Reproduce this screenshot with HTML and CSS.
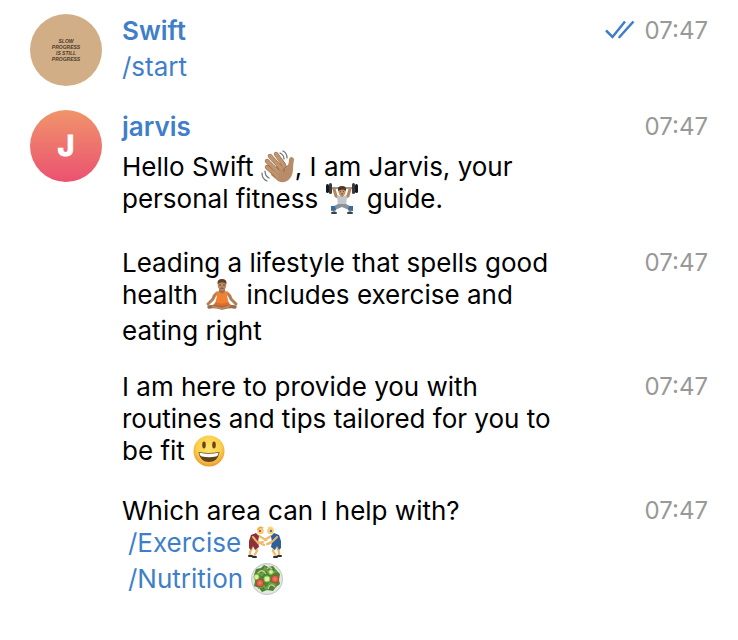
FILE: index.html
```
<!DOCTYPE html>
<html lang="en">
<head>
<meta charset="utf-8">
<title>jarvis</title>
<link rel="stylesheet" href="styles.css">
</head>
<body>
<main class="chat">
  <article class="message">
    <div class="avatar avatar-quote"><span>SLOW<br>PROGRESS<br>IS STILL<br>PROGRESS</span></div>
    <div class="body">
      <h2 class="name">Swift</h2>
      <p class="line"><a href="#start">/start</a></p>
    </div>
    <div class="meta">
      <svg class="checks" viewBox="0 0 30 20" role="img" aria-label="Read"><path d="M1 9.500 7.500 16 20 .5M13.500 15.500 14.500 16 28.500 .5"/></svg>
      <time>07:47</time>
    </div>
  </article>

  <article class="message message-intro">
    <div class="avatar avatar-letter">J</div>
    <div class="body">
      <h2 class="name name-spaced">jarvis</h2>
      <p class="line">Hello Swift <svg class="emoji" viewBox="0 0 34 34" role="img" aria-label="waving hand">
        <g fill="none" stroke="#6b7073" stroke-width="1.200" stroke-linecap="round"><path d="M22 1Q26 3 26 8M19 3Q23 5 23 9M1 23Q1 29 6 31M4 21Q4 26 8 28"/></g>
        <path d="M12 19 21 12 26 16Q28 14 28 10C28 6 33 6 33 10Q32 14 32 19C32 29 24 35 17 31L10 25Z" fill="#b88c68"/>
        <path d="M6 11 16 21M9 6 19 17M15 4 23 15M6 17 15 25" stroke="#8f6542" stroke-width="4.400" stroke-linecap="round"/>
        <path d="M6 11 17 22M9 6 20 18M15 4 24 17M6 17 16 26" stroke="#c1956f" stroke-width="3.500" stroke-linecap="round"/>
        <path d="M26 16Q22 18 23 22" fill="none" stroke="#946a48" stroke-width="1"/>
      </svg>, I am Jarvis, your</p>
      <p class="line line-tall">personal fitness <svg class="emoji" viewBox="0 0 34 34" role="img" aria-label="weight lifter">
        <path d="M4 6H30" stroke="#777" stroke-width="1.500"/>
        <path d="M9 7 11 14 15 16M25 7 23 14 19 16" fill="none" stroke="#b38661" stroke-width="3" stroke-linecap="round"/>
        <path d="M12 14H22L21 24H13Z" fill="#c3c7ca"/><path d="M15 13Q17 17 19 13" fill="#b38661"/>
        <path d="M13 22H21L27 25 24 28 17 25 10 28 7 25Z" fill="#8a939a"/>
        <path d="M9 26V30M25 26V30" stroke="#b38661" stroke-width="3"/>
        <path d="M6 24 10 24 11 28 6 29ZM28 24 24 24 23 28 28 29Z" fill="#2e70a5"/>
        <path d="M7 31H11M23 31H27" stroke="#38434d" stroke-width="2" stroke-linecap="round"/>
        <ellipse cx="17" cy="9.500" rx="3.600" ry="4.800" fill="#c1926c"/><path d="M13 9Q12 4 17 4T21 9Q18 6 13 9Z" fill="#513622"/><path d="M15 9.500H16M18 9.500H19M16 12H18" stroke="#6b462f" stroke-width=".8"/>
        <rect x="1" y="2" width="3" height="9" rx="1.500" fill="#15191d"/><rect x="4" y="1" width="3" height="11" rx="1.500" fill="#343a40"/><rect x="27" y="1" width="3" height="11" rx="1.500" fill="#343a40"/><rect x="30" y="2" width="3" height="9" rx="1.500" fill="#15191d"/>
      </svg> guide.</p>
    </div>
    <div class="meta"><time>07:47</time></div>
  </article>

  <article class="message">
    <div class="body">
      <p class="line">Leading a lifestyle that spells good</p>
      <p class="line line-tall">health <svg class="emoji" viewBox="0 0 34 34" role="img" aria-label="person in lotus position">
        <path d="M12 15Q9 17 8 21L3 26M22 15Q25 17 26 21L31 26" fill="none" stroke="#b07e59" stroke-width="3" stroke-linecap="round"/>
        <path d="M14 9H20V16H14Z" fill="#a17250"/>
        <path d="M11 14 14 13Q17 18 20 13L23 14 22 18 24 26H10L12 18Z" fill="#f08034"/>
        <path d="M11 24Q17 27 23 24L27 28 17 31 7 28Z" fill="#e06c28"/>
        <path d="M4 29Q9 28 17 30Q25 28 30 29" fill="none" stroke="#9b6b47" stroke-width="3.400" stroke-linecap="round"/><path d="M7 28.500 17 30.500 25 28" fill="none" stroke="#c18d64" stroke-width="1.500"/>
        <ellipse cx="17" cy="7" rx="4.300" ry="5.800" fill="#b98961"/><path d="M12.500 6Q12 1 17 1T21.500 6Q17 2.500 12.500 6Z" fill="#60402a"/><path d="M14 7H16M18 7H20M15.500 10.500Q17 9.500 18.500 10.500" fill="none" stroke="#694630" stroke-width=".9"/>
      </svg> includes exercise and</p>
      <p class="line">eating right</p>
    </div>
    <div class="meta"><time>07:47</time></div>
  </article>

  <article class="message">
    <div class="body">
      <p class="line">I am here to provide you with</p>
      <p class="line">routines and tips tailored for you to</p>
      <p class="line line-tall">be fit <svg class="emoji" viewBox="0 0 34 34" role="img" aria-label="smiling face">
        <defs><radialGradient id="face" cx=".5" cy=".4" r=".6"><stop offset="0" stop-color="#ffe568"/><stop offset=".65" stop-color="#fbd04c"/><stop offset="1" stop-color="#e8992c"/></radialGradient></defs>
        <circle cx="17" cy="17" r="15.500" fill="url(#face)"/>
        <ellipse cx="12" cy="11" rx="1.800" ry="3.400" fill="#70421b"/><ellipse cx="22" cy="11" rx="1.800" ry="3.400" fill="#70421b"/>
        <path d="M6.500 18Q17 20 27.500 18C26.500 25 22 28 17 28S7.500 25 6.500 18Z" fill="#62401d"/>
        <path d="M7.500 18.800Q17 20.500 26.500 18.800Q26.500 22 24 22.500Q17 24 10 22.500Q7.500 22 7.500 18.800Z" fill="#fff"/>
      </svg></p>
    </div>
    <div class="meta"><time>07:47</time></div>
  </article>

  <article class="message">
    <div class="body">
      <p class="line">Which area can I help with?</p>
      <p class="line line-tall line-command"><a href="#exercise">/Exercise</a> <svg class="emoji" viewBox="0 0 34 34" role="img" aria-label="wrestlers">
        <g fill="none" stroke="#efbd70" stroke-width="2.400" stroke-linecap="round"><path d="M11 10 18 14M8 15 16 19M23 10 17 14M26 15 19 18M7 20 9 25 6 30M5 20 2 26 2 29M27 20 25 25 28 30M29 20 31 26 31 29"/></g>
        <path d="M3 9 8 7 11 10 10 16 11 21 7 24 5 20 3 24 1 22 1 15Z" fill="#8f3035"/>
        <path d="M31 9 26 7 23 10 24 16 23 21 27 24 29 20 31 24 33 22 33 15Z" fill="#2d5f9d"/>
        <path d="M5 11 10 17 15 16M29 11 24 16 20 18" fill="none" stroke="#edb96b" stroke-width="2" stroke-linecap="round"/>
        <circle cx="12.500" cy="5" r="3.300" fill="#f4cb7c"/><circle cx="22.500" cy="5" r="3.300" fill="#f4cb7c"/>
        <path d="M9.500 4Q11 0 15 2" fill="none" stroke="#edaa40" stroke-width="1.500"/><path d="M20 2Q24 0 25.500 4" fill="none" stroke="#ffd76a" stroke-width="1.500"/>
        <circle cx="12" cy="5" r="1" fill="#b23435"/><circle cx="23" cy="5" r="1" fill="#285792"/>
        <path d="M1 30H4M5 31H8M26 31H29M30 30H33" stroke="#292d34" stroke-width="2" stroke-linecap="round"/>
      </svg></p>
      <p class="line line-command"><a href="#nutrition">/Nutrition</a> <svg class="emoji" viewBox="0 0 34 34" role="img" aria-label="green salad">
        <circle cx="17" cy="17" r="16" fill="#c8cdcc"/><circle cx="17" cy="17" r="14.800" fill="#e4e8e3"/>
        <path d="M4 13 6 7 11 6 14 3 18 5 23 4 26 8 30 12 29 18 30 22 26 25 23 29 17 28 12 30 9 26 4 24 5 19Z" fill="#48872f"/>
        <path d="M7 11 12 13 15 6 20 12 27 9M8 26 14 24 16 27 20 21 26 23" fill="none" stroke="#68a53b" stroke-width="2"/>
        <path d="M8 11Q12 6 16 12M17 7Q19 4 22 7M18 27Q20 20 25 25" fill="none" stroke="#dfb9ae" stroke-width="1.300"/>
        <g fill="#def0a4" stroke="#8fbd55"><circle cx="6.500" cy="15" r="2.600"/><circle cx="17" cy="17" r="3"/><circle cx="21" cy="10" r="2.300"/></g>
        <g fill="#e0624b" stroke="#bd4434"><circle cx="10" cy="21" r="3.700"/><circle cx="25" cy="17" r="3.700"/></g><path d="M8.500 21H11.500M10 19.500V22.500M23.500 17H26.500M25 15.500V18.500" stroke="#ee927a" stroke-width=".8"/>
      </svg></p>
    </div>
    <div class="meta"><time>07:47</time></div>
  </article>
</main>
</body>
</html>
```
FILE: styles.css
```
* { box-sizing: border-box; }

body {
  margin: 0;
  background: #fff;
  color: #000;
  font-family: Inter, "Liberation Sans", sans-serif;
  font-size: 26px;
  line-height: 32px;
}

.chat {
  display: flex;
  flex-direction: column;
  gap: 24px;
  padding: 15px 30px 40px;
}

.message {
  display: grid;
  grid-template-columns: 72px 1fr auto;
  column-gap: 20px;
}

.message-intro { margin-bottom: 4px; }

.avatar {
  display: grid;
  place-items: center;
  width: 72px;
  height: 72px;
  margin: -1px 0 1px;
  border-radius: 50%;
}

.avatar-quote {
  background: #d2ae86;
  color: #4a3c2f;
  font: italic bold 5px/6px "Liberation Sans", sans-serif;
  text-align: center;
}

.avatar-letter {
  background: linear-gradient(#f0956b, #eb5171);
  color: #fff;
  font-size: 29px;
  font-weight: 700;
  -webkit-text-stroke: 1px #fff;
}

.body { grid-column: 2; }

.name {
  margin: 0 0 4px;
  color: #3f7fc9;
  font-size: 26px;
  font-weight: 600;
}

.name-spaced { margin-bottom: 8px; }

.line {
  height: 32px;
  margin: 0;
  white-space: nowrap;
}

.line-tall { height: 36px; }

.line-command { padding-left: 6px; }

a {
  color: #3f7fc9;
  text-decoration: none;
}

.emoji {
  width: 34px;
  height: 34px;
  margin: -4px 0;
  vertical-align: -4px;
}

.meta {
  display: flex;
  align-items: center;
  gap: 10px;
  height: 32px;
  color: #999;
  font-size: 24px;
}

.checks {
  width: 30px;
  height: 20px;
  fill: none;
  stroke: #3f7fc9;
  stroke-width: 2.500;
}
```
